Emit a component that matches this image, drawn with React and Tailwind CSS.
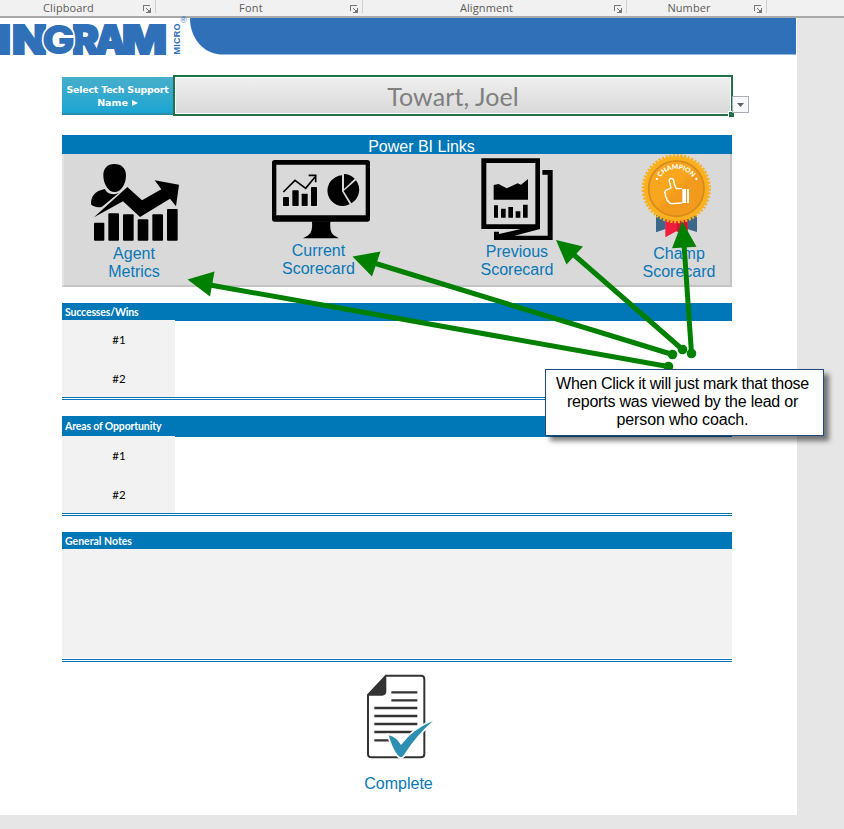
import React from "react";

const Launcher = ({ className }) => (
  <svg className={className} width="8" height="8" viewBox="0 0 8 8" fill="none" stroke="#777" shapeRendering="crispEdges">
    <path d="M0.5 6V0.5H7" />
    <path d="M3 3l3.5 3.5" shapeRendering="auto" />
    <path d="M7.5 3V7.5H3" />
    <path d="M6.5 5V6.5H5" />
  </svg>
);

const Group = ({ label, className, textClass, iconClass }) => (
  <div className={"relative flex h-4 shrink-0 items-center justify-center " + className}>
    <span className={"whitespace-nowrap " + textClass}>{label}</span>
    <Launcher className={"absolute top-[5px] " + iconClass} />
    <span className="absolute right-0 top-0 h-[13px] w-px bg-[#cfcfcf]" />
  </div>
);

const Ribbon = () => (
  <div className="flex h-[18px] w-full border-b-2 border-[#a9a9a9] bg-[#f1f1f1] font-['Open_Sans',sans-serif] text-[11px] leading-4 text-[#5c5c5c]">
    <Group label="Clipboard" className="w-[156px] pr-[19px]" textClass="tracking-[0.1px]" iconClass="right-[5px]" />
    <Group label="Font" className="w-[207px] pr-[17px]" textClass="tracking-[0.3px]" iconClass="right-[5px]" />
    <Group label="Alignment" className="w-[264px] pr-[17px]" textClass="tracking-[0.1px]" iconClass="right-[5px]" />
    <Group label="Number" className="w-[140px] pr-4" textClass="tracking-[0.1px]" iconClass="right-[5px]" />
  </div>
);

const Banner = () => (
  <svg className="block overflow-visible" width="797" height="37" viewBox="0 18 797 37">
    <path d="M190 18H796V54.5H220C203 53 190 38 190 18Z" fill="#2f70b8" />
    <g fill="#2f70b8" stroke="#2f70b8" fontFamily="Inter, sans-serif" fontWeight="900" fontSize="40" strokeWidth="2">
      <text x="-3" y="53.5" textLength="14" lengthAdjust="spacingAndGlyphs">I</text>
      <text x="12" y="53.5" textLength="35" lengthAdjust="spacingAndGlyphs">N</text>
      <text x="72" y="53.5" textLength="27" lengthAdjust="spacingAndGlyphs">R</text>
      <text x="95" y="53.5" textLength="31" lengthAdjust="spacingAndGlyphs">A</text>
      <text x="122" y="53.5" textLength="45" lengthAdjust="spacingAndGlyphs">M</text>
      <text x="42" y="53.5" textLength="33" lengthAdjust="spacingAndGlyphs" stroke="#fff" strokeWidth="3" paintOrder="stroke">G</text>
    </g>
    <text transform="translate(179.5 54.5) rotate(-90)" fill="#2f70b8" fontFamily="Liberation Sans, sans-serif" fontWeight="700" fontSize="9" textLength="31">MICRO</text>
    <text x="180.5" y="23" fill="#2f70b8" fontFamily="Liberation Sans, sans-serif" fontSize="8.5">®</text>
  </svg>
);

const AgentIcon = () => (
  <svg className="block" width="96" height="91" viewBox="108 72 288 273">
    <path d="M193 102c22 0 36 14 35 36-1 24-14 48-34 48s-33-24-34-48c-1-22 12-36 33-36Z" />
    <path d="M164 177c9 16 24 19 42 12l-50 41c-10 4-28 0-33-7 0-26 12-40 41-46Z" />
    <path d="M132 262L232 171L276 211L334 178L314 151L387 164L378 229L360 206L270 261L219 214Z" />
    <rect x="132" y="278" width="31" height="54" rx="3" />
    <rect x="175" y="250" width="32" height="82" rx="3" />
    <rect x="219" y="253" width="32" height="79" rx="3" />
    <rect x="263" y="268" width="32" height="64" rx="3" />
    <rect x="307" y="253" width="32" height="79" rx="3" />
    <rect x="351" y="237" width="32" height="95" rx="3" />
  </svg>
);

const MonitorIcon = () => (
  <svg className="block" width="100" height="88" viewBox="60 72 300 264">
    <path fillRule="evenodd" d="M74 90H352Q360 90 360 98V267Q360 275 352 275H74Q66 275 66 267V98Q66 90 74 90ZM79 104V256H347V104Z" />
    <path d="M186 274H241Q238 308 251 316L267 325H159L175 316Q189 308 186 274Z" />
    <rect x="99" y="201" width="18" height="27" rx="2" />
    <rect x="127" y="181" width="19" height="47" rx="2" />
    <rect x="155" y="191" width="18" height="37" rx="2" />
    <rect x="183" y="171" width="18" height="57" rx="2" />
    <path d="M100 186L135 151L167 175L195 141M176 136H197V157" fill="none" stroke="#000" strokeWidth="5" />
    <path d="M276 136A46 46 0 1 0 299 223L276 184Z" />
    <path d="M282 132A47 47 0 0 1 314 146L282 177Z" />
    <path d="M318 151A47 47 0 0 1 304 220L281 183Z" />
  </svg>
);

const ReportIcon = () => (
  <svg className="block" width="80" height="89" viewBox="81 72 240 267">
    <path fillRule="evenodd" d="M94 85H270V297H94ZM109 99V283H256V99Z" />
    <path d="M277 120H308V330H132V305H147V312L212 297H270L194 317H293V134H277Z" />
    <path d="M131 165L146 162L170 175L203 160L213 164L234 147V209H131Z" />
    <path d="M132 226h12v37h-12zM153 236h14v27h-14zM175 231h14v32h-14zM197 244h14v19h-14zM219 224h14v39h-14z" />
  </svg>
);

const MedalIcon = () => (
  <svg className="block" width="80" height="91" viewBox="117 72 240 273">
    <defs>
      <path id="medal-arc" d="M171 175A58 58 0 0 1 287 175" />
      <linearGradient id="medal-face" x1="0" y1="0" x2="1" y2="1">
        <stop offset="0.45" stopColor="#f9a61f" />
        <stop offset="0.55" stopColor="#f19a1b" />
      </linearGradient>
    </defs>
    <path d="M168 255H197V297L168 307ZM262 255H291V306L262 297Z" fill="#3d6788" />
    <path d="M196 265H263V322L229 304L196 322Z" fill="#f01d3c" />
    <path d="M230 265H263V300L230 304Z" fill="#c81a35" />
    <circle cx="229" cy="176" r="98" fill="#fbb01e" />
    <circle cx="229" cy="176" r="100" fill="none" stroke="#fbb01e" strokeWidth="8" strokeDasharray="6.6 4.62" />
    <circle cx="229" cy="176" r="83" fill="url(#medal-face)" stroke="#d6891c" strokeWidth="5" />
    <text fill="#fff" fontFamily="Lato, sans-serif" fontWeight="900" fontSize="20" textAnchor="middle">
      <textPath href="#medal-arc" startOffset="50%">CHAMPION</textPath>
    </text>
    <circle cx="171" cy="147" r="3.5" fill="#fff" />
    <circle cx="289" cy="147" r="3.5" fill="#fff" />
    <path d="M246 176H229Q222 164 221 151Q218 143 211 146Q205 150 210 161L213 174L197 181Q192 187 197 193Q194 200 200 204Q199 212 206 214Q207 221 216 221L246 219" fill="none" stroke="#fff" strokeWidth="4" strokeLinejoin="round" />
    <path d="M247 177h11v42h-11zM261 177h6v42h-6z" fill="#fff" />
  </svg>
);

const LinkCell = ({ className, icon, lines, labelClass = "" }) => (
  <div className={"flex flex-col items-center " + className}>
    {icon}
    <div className={"text-center text-base leading-[18px] text-[#0877b8] " + labelClass}>
      {lines[0]}
      <br />
      {lines[1]}
    </div>
  </div>
);

const Section = ({ title, headClass, className }) => (
  <section className={"w-[670px] border-b-[3px] border-double border-[#0877b8] font-[Lato,sans-serif] " + className}>
    <h2 className={"bg-[#0077b6] pl-[3px] text-[10.5px] font-bold text-white " + headClass}>{title}</h2>
    <div className="-mt-px flex h-[77px] w-[113px] flex-col bg-[#f2f2f2] pl-px text-center text-[11.5px] leading-[39px] text-black">
      <span>#1</span>
      <span>#2</span>
    </div>
  </section>
);

const CompleteIcon = () => (
  <svg className="block" width="84" height="90" viewBox="72 96 252 270">
    <path d="M168 107H273Q283 107 283 117V342Q283 352 273 352H125Q114 352 114 342V165Z" fill="#fff" stroke="#333" strokeWidth="6" />
    <path d="M169 105V154Q169 167 156 167H112Z" fill="#333" />
    <path d="M184 157H262M184 181H262M133 204H262M133 228H262M133 252H262M133 276H262M133 301H180" stroke="#333" strokeWidth="7" />
    <path d="M176 286Q200 292 213 315Q250 266 309 243Q260 284 221 346Q213 358 204 346Q188 328 176 286Z" fill="#2d8fb2" stroke="#fff" strokeWidth="10" paintOrder="stroke" />
  </svg>
);

const Arrows = () => (
  <svg className="pointer-events-none absolute left-0 top-0" width="844" height="829" fill="#008000" stroke="none">
    <g stroke="#008000" strokeWidth="5">
      <path d="M210 285L668 366.5M374 263L672.5 354.5M573 254L682.5 349.5M684 244L691.5 353.5" />
    </g>
    <path d="M187.5 279.5L214.5 271.5L210 296.5ZM352.5 256.5L380.5 251.5L372 276.5ZM556 240L583 246.5L566.5 264.5ZM682.3 221.5L696.5 246.8L672 248.3Z" />
    <circle cx="668.5" cy="366.5" r="4.8" />
    <circle cx="672.5" cy="354.5" r="4.8" />
    <circle cx="682.5" cy="349.5" r="4.8" />
    <circle cx="691.5" cy="353.5" r="4.8" />
  </svg>
);

export default function App() {
  return (
    <div className="relative h-[829px] w-[844px] overflow-hidden bg-[#e6e6e6] font-['Liberation_Sans',Arial,sans-serif]">
      <Ribbon />
      <main className="flex h-[797px] w-[797px] flex-col bg-white">
        <Banner />
        <div className="ml-[62px] mt-5 flex h-[41px] items-center">
          <div className="flex h-[38px] w-[111px] flex-col justify-center border-b-2 border-[#2b8cad] bg-linear-to-b from-[#46aecb] to-[#18a5d2] pt-[3px] text-center font-['DejaVu_Sans',sans-serif] text-[9.5px] font-bold leading-[13px] text-white">
            <span className="whitespace-nowrap tracking-[-0.25px]">Select Tech Support</span>
            <span className="flex items-center justify-center gap-1">
              Name
              <svg width="6" height="6" viewBox="0 0 6 6" fill="#fff">
                <path d="M0 0L6 3L0 6Z" />
              </svg>
            </span>
          </div>
          <div className="relative h-[41px] w-[560px] border-2 border-[#217346] bg-white p-px">
            <div className="flex h-full items-center justify-center bg-linear-to-b from-[#efefef] to-[#d9d9d9] pt-0.5 font-[Lato,sans-serif] text-[25px] leading-none tracking-[0.1px] text-[#7f7f7f]">
              Towart, Joel
            </div>
            <span className="absolute -bottom-[3px] -right-[3px] h-1.5 w-1.5 border-l border-t border-white bg-[#217346]" />
            <span className="absolute -right-[18px] top-[19px] flex h-[17px] w-[17px] items-center justify-center border border-[#a8adb8] bg-[#f6f8fc]">
              <svg width="7" height="4" viewBox="0 0 7 4" fill="#5f5f5f">
                <path d="M0 0H7L3.5 4Z" />
              </svg>
            </span>
          </div>
        </div>

        <section className="ml-[62px] mt-[19px] w-[670px]">
          <h1 className="h-[19px] bg-[#0077b6] pl-[49px] text-center text-base leading-[23px] text-white">Power BI Links</h1>
          <div className="flex h-[133px] border-b-2 border-l-2 border-r-2 border-[#c4c4c4] border-l-[#e4e4e4] bg-[#d9d9d9]">
            <LinkCell className="w-[142px] pr-0.5" icon={<AgentIcon />} lines={["Agent", "Metrics"]} />
            <LinkCell className="w-[228px]" icon={<MonitorIcon />} lines={["Current", "Scorecard"]} labelClass="mr-[3px]" />
            <LinkCell className="w-[166px]" icon={<ReportIcon />} lines={["Previous", "Scorecard"]} />
            <LinkCell className="-mr-7 w-[158px]" icon={<MedalIcon />} lines={["Champ", "Scorecard"]} />
          </div>
        </section>

        <Section title="Successes/Wins" className="ml-[62px] mt-4 h-[97px]" headClass="h-[18px] leading-[19px] tracking-[-0.15px]" />
        <Section title="Areas of Opportunity" className="ml-[62px] mt-4 h-[100px]" headClass="h-[21px] leading-[21px] tracking-[-0.15px]" />

        <section className="ml-[62px] mt-4 h-[130px] w-[670px] border-b-[3px] border-double border-[#0877b8]">
          <h2 className="h-[17px] bg-[#0077b6] pl-[3px] font-[Lato,sans-serif] text-[10.5px] font-bold leading-[19px] text-white">General Notes</h2>
          <div className="h-[109px] bg-[#f2f2f2]" />
        </section>

        <div className="ml-[62px] mt-[10px] flex w-[673px] flex-col items-center">
          <div className="pr-[6px]">
            <CompleteIcon />
          </div>
          <span className="mt-[13px] text-base leading-[18px] text-[#0877b8]">Complete</span>
        </div>
      </main>

      <Arrows />
      <div className="absolute left-[545px] top-[369px] h-[67px] w-[279px] border border-[#1f4a7c] bg-white pr-1 pt-[5px] text-center text-base leading-[18px] tracking-[-0.29px] text-black shadow-[5px_5px_5px_rgba(0,0,0,0.5)]">
        When Click it will just mark that those
        <br />
        <span className="tracking-[-0.22px]">reports was viewed by the lead or</span>
        <br />
        <span className="tracking-[-0.15px]">person who coach.</span>
      </div>
    </div>
  );
}
